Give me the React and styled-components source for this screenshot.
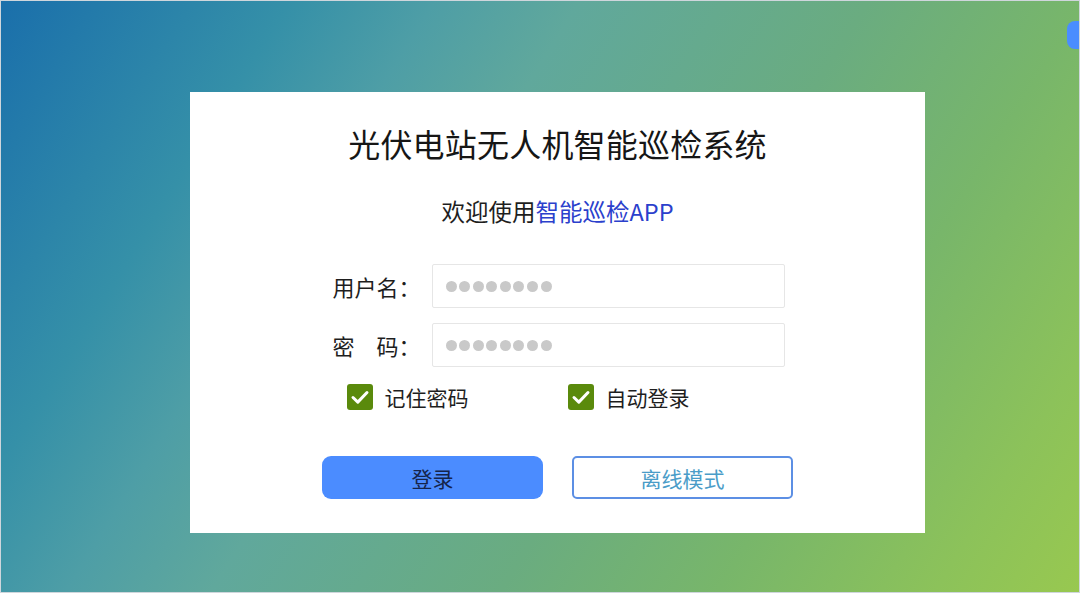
import React from 'react';
import styled, { createGlobalStyle } from 'styled-components';

const GlobalStyle = createGlobalStyle`
  html, body {
    margin: 0;
    padding: 0;
  }
  body {
    font-family: "Noto Sans CJK SC", "Noto Sans", sans-serif;
  }
  * {
    box-sizing: border-box;
  }
`;

const Page = styled.div`
  position: relative;
  width: 1080px;
  height: 593px;
  overflow: hidden;
  border: 1px solid #cfd6dc;
  padding: 91px 0 0 189px;
  background: linear-gradient(
    122deg,
    #1a6fab 0%,
    #3590a8 20%,
    #4e9ea6 30%,
    #60a89c 40%,
    #6aac80 60%,
    #78b66a 75%,
    #8cc25a 90%,
    #98c850 100%
  );
`;

const CornerMark = styled.div`
  position: absolute;
  top: 20px;
  right: -8px;
  width: 20px;
  height: 28px;
  border-radius: 8px;
  background: #4a8dff;
`;

const Card = styled.div`
  width: 735px;
  height: 441px;
  background: #ffffff;
  padding-top: 31px;
  display: flex;
  flex-direction: column;
  align-items: center;
`;

const Title = styled.h1`
  margin: 0;
  font-size: 32px;
  line-height: 40px;
  font-weight: 400;
  color: #161616;
  letter-spacing: 0.2px;
`;

const Subtitle = styled.p`
  margin: 33px 0 0;
  font-size: 23.5px;
  line-height: 30px;
  color: #1e1e1e;
`;

const Highlight = styled.span`
  color: #2b40cc;
`;

const Form = styled.div`
  width: 452px;
  margin: 38px 0 0 2px;
  display: flex;
  flex-direction: column;
  gap: 15px;
`;

const FieldRow = styled.div`
  display: flex;
  align-items: center;
`;

const Label = styled.span`
  width: 99px;
  font-size: 22px;
  line-height: 44px;
  color: #1e1e1e;
  white-space: pre;
`;

const InputBox = styled.div`
  width: 353px;
  height: 44px;
  border: 1px solid #e6e6e6;
  border-radius: 2px;
  display: flex;
  align-items: center;
  padding-left: 13px;
  gap: 2.6px;
`;

const Dot = styled.span`
  width: 11px;
  height: 11px;
  border-radius: 50%;
  background: #c9c9c9;
`;

const CheckRow = styled.div`
  display: grid;
  grid-template-columns: 221px auto;
  padding-left: 14px;
  margin-top: 2px;
`;

const CheckItem = styled.label`
  display: flex;
  align-items: center;
  gap: 12px;
  height: 26px;
  font-size: 21px;
  color: #1e1e1e;
`;

const CheckBox = styled.span`
  width: 26px;
  height: 26px;
  border-radius: 3px;
  background: #5a8a0c;
  display: flex;
  align-items: center;
  justify-content: center;
`;

const ButtonRow = styled.div`
  display: flex;
  gap: 29px;
  margin-top: 46px;
`;

const Button = styled.button`
  width: 221px;
  height: 43px;
  font-family: inherit;
  font-size: 21px;
  cursor: pointer;
  background: ${p => (p.$primary ? '#4b8cff' : '#ffffff')};
  color: ${p => (p.$primary ? '#15244a' : '#4a9cc8')};
  border: ${p => (p.$primary ? 'none' : '2px solid #5c8fe4')};
  border-radius: ${p => (p.$primary ? '9px' : '5px')};
`;

const Check = () => (
  <CheckBox>
    <svg width="26" height="26" viewBox="0 0 26 26">
      <path d="M6 13.5l4.8 4.6L20 8.5" fill="none" stroke="#fff" strokeWidth="3" strokeLinecap="round" strokeLinejoin="round" />
    </svg>
  </CheckBox>
);

const Dots = () => (
  <InputBox>
    {Array.from({ length: 8 }).map((_, i) => (
      <Dot key={i} />
    ))}
  </InputBox>
);

export default function App() {
  return (
    <Page>
      <GlobalStyle />
      <CornerMark />
      <Card>
        <Title>光伏电站无人机智能巡检系统</Title>
        <Subtitle>
          欢迎使用<Highlight>智能巡检APP</Highlight>
        </Subtitle>
        <Form>
          <FieldRow>
            <Label>用户名：</Label>
            <Dots />
          </FieldRow>
          <FieldRow>
            <Label>{'密　码：'}</Label>
            <Dots />
          </FieldRow>
          <CheckRow>
            <CheckItem>
              <Check />
              记住密码
            </CheckItem>
            <CheckItem>
              <Check />
              自动登录
            </CheckItem>
          </CheckRow>
        </Form>
        <ButtonRow>
          <Button $primary>登录</Button>
          <Button>离线模式</Button>
        </ButtonRow>
      </Card>
    </Page>
  );
}
